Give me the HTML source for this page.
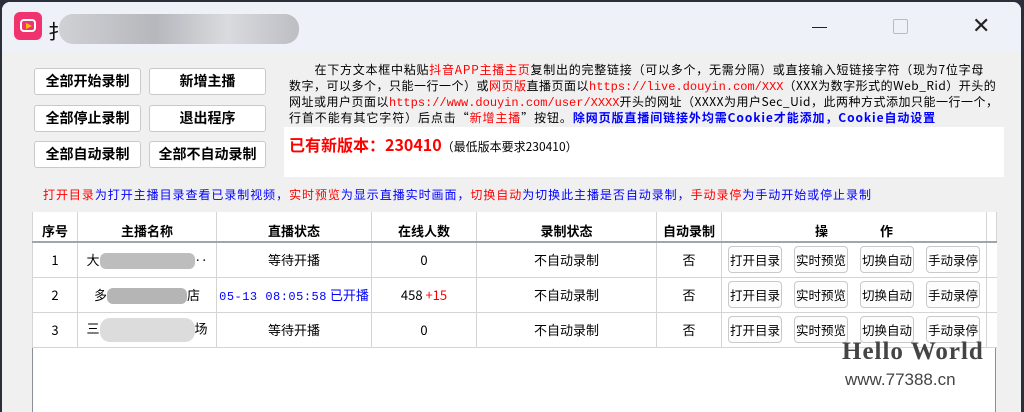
<!DOCTYPE html>
<html><head><meta charset="utf-8"><style>
*{margin:0;padding:0;box-sizing:border-box}
body{width:1024px;height:407px;overflow:hidden;background:#2b2f3a;font-family:"Liberation Sans","Noto Sans CJK SC",sans-serif;position:relative}
.win{position:absolute;left:2px;top:2px;width:1019px;height:410px;background:#f0f0f0;border-radius:8px 8px 0 0;overflow:hidden}
.title{position:absolute;left:0;top:0;width:100%;height:49px;background:#eff1f8}
.abs{position:absolute}
.btn{position:absolute;background:#fff;border:1px solid #c9c9c9;border-radius:3px;font-size:14px;font-weight:bold;text-align:center;line-height:25px;color:#000;height:27px}
.para{position:absolute;left:287px;top:60px;font-size:12px;line-height:16px;color:#000;font-family:"Noto Sans CJK SC",sans-serif;white-space:nowrap;letter-spacing:.5px}
.para div{height:16px}
.r{color:#f00}.b{color:#00f}
.mono{font-family:"Liberation Mono",monospace;font-size:12px;letter-spacing:0}
table{position:absolute;left:30px;top:210px;border-collapse:collapse;background:#fff;font-size:13px;table-layout:fixed;font-family:"Noto Sans CJK SC",sans-serif}
td,th{border:1px solid #d4d4d4;text-align:center;height:35px;padding:0;white-space:nowrap;overflow:hidden}
th{height:30px;font-weight:bold;font-size:13px;vertical-align:bottom;padding-bottom:1px;border-bottom:2px solid #a0a4ab;border-top:none}
.ab{display:inline-block;width:54px;height:27px;border:1px solid #c9c9c9;border-radius:4px;line-height:25px;font-size:12.5px;background:#fdfdfd;margin:0 6px;vertical-align:middle}
</style></head><body>
<div class="win">
<div class="title">
 <div class="abs" style="left:12px;top:10px;width:28px;height:28px;background:#f0336e;border-radius:6px"></div>
 <div class="abs" style="left:18px;top:17px;width:16px;height:13px;border:2.5px solid #fff;border-radius:4px"></div>
 <div class="abs" style="left:24px;top:21px;width:0;height:0;border-left:6px solid #f6c200;border-top:3.5px solid transparent;border-bottom:3.5px solid transparent"></div>
 <div class="abs" style="left:46px;top:14px;font-size:20px;color:#111">扌</div>
 <div class="abs" style="left:57px;top:12px;width:240px;height:30px;background:linear-gradient(90deg,#c8c9cd,#a8a9ad 40%,#d4d5d9 70%,#b0b1b5);border-radius:14px;opacity:.8"></div>
 <div class="abs" style="left:810px;top:25px;width:15px;height:1px;background:#222"></div>
 <div class="abs" style="left:891px;top:17px;width:15px;height:15px;border:1px solid #bbb;border-radius:2px"></div>
 <div class="abs" style="left:970px;top:13px;font-size:22px;color:#222;line-height:22px">✕</div>
</div>
<div class="btn" style="left:32px;top:66px;width:107px">全部开始录制</div>
<div class="btn" style="left:147px;top:66px;width:117px">新增主播</div>
<div class="btn" style="left:32px;top:103px;width:107px">全部停止录制</div>
<div class="btn" style="left:147px;top:103px;width:117px">退出程序</div>
<div class="btn" style="left:32px;top:139px;width:107px">全部自动录制</div>
<div class="btn" style="left:147px;top:139px;width:117px">全部不自动录制</div>
<div class="para">
<div style="letter-spacing:.75px">　　在下方文本框中粘贴<span class="r">抖音APP主播主页</span>复制出的完整链接（可以多个，无需分隔）或直接输入短链接字符（现为7位字母</div>
<div>数字，可以多个，只能一行一个）或<span class="r">网页版</span>直播页面以<span class="r mono">https://live.douyin.com/XXX</span>（XXX为数字形式的Web_Rid）开头的</div>
<div>网址或用户页面以<span class="r mono">https://www.douyin.com/user/XXXX</span>开头的网址（XXXX为用户Sec_Uid，此两种方式添加只能一行一个，</div>
<div style="letter-spacing:.9px">行首不能有其它字符）后点击“<span class="r">新增主播</span>”按钮。<b class="b">除网页版直播间链接外均需Cookie才能添加，Cookie自动设置</b></div>
</div>
<div class="abs" style="left:282px;top:125px;width:720px;height:50px;background:#fff"></div>
<div class="abs" style="left:287px;top:130px;font-size:12px;font-family:'Noto Sans CJK SC',sans-serif"><b class="r" style="font-size:16px">已有新版本：230410</b>（最低版本要求230410）</div>
<div class="abs" style="left:41px;top:184px;font-size:12px;font-family:'Noto Sans CJK SC',sans-serif;white-space:nowrap;letter-spacing:.95px"><span class="r">打开目录</span><span class="b">为打开主播目录查看已录制视频，</span><span class="r">实时预览</span><span class="b">为显示直播实时画面，</span><span class="r">切换自动</span><span class="b">为切换此主播是否自动录制，</span><span class="r">手动录停</span><span class="b">为手动开始或停止录制</span></div>
<div class="abs" style="left:30px;top:210px;width:964px;height:200px;background:#fff;border-left:1px solid #8a8f98;border-top:1px solid #8a8f98;border-right:1px solid #8a8f98"></div>
<table>
<colgroup><col style="width:45px"><col style="width:139px"><col style="width:155px"><col style="width:105px"><col style="width:180px"><col style="width:65px"><col style="width:264px"><col style="width:10px"></colgroup>
<tr><th>序号</th><th>主播名称</th><th>直播状态</th><th>在线人数</th><th>录制状态</th><th>自动录制</th><th>操　　　　作</th><th></th></tr>
<tr><td>1</td><td>大<span style="display:inline-block;width:95px;height:16px;background:#bdbdbd;vertical-align:middle;border-radius:6px"></span>‥</td><td>等待开播</td><td>0</td><td>不自动录制</td><td>否</td><td><span class="ab">打开目录</span><span class="ab">实时预览</span><span class="ab">切换自动</span><span class="ab">手动录停</span></td><td style="border-right:none"></td></tr>
<tr><td>2</td><td>多<span style="display:inline-block;width:80px;height:16px;background:#b5b5b5;vertical-align:middle;border-radius:6px"></span>店</td><td class="b"><span class="mono" style="letter-spacing:.5px">05-13 08:05:58</span> 已开播</td><td>458 <span class="r">+15</span></td><td>不自动录制</td><td>否</td><td><span class="ab">打开目录</span><span class="ab">实时预览</span><span class="ab">切换自动</span><span class="ab">手动录停</span></td><td style="border-right:none"></td></tr>
<tr><td>3</td><td>三<span style="display:inline-block;width:95px;height:24px;background:#dcdcdc;vertical-align:middle;border-radius:10px"></span>场</td><td>等待开播</td><td>0</td><td>不自动录制</td><td>否</td><td><span class="ab">打开目录</span><span class="ab">实时预览</span><span class="ab">切换自动</span><span class="ab">手动录停</span></td><td style="border-right:none"></td></tr>
</table>
<div class="abs" style="left:840px;top:336px;font-size:25px;font-weight:bold;color:#444;font-family:'Liberation Serif',serif;letter-spacing:1px">Hello World</div>
<div class="abs" style="left:843px;top:368px;font-size:17px;color:#444">www.77388.cn</div>
</div>
</body></html>
